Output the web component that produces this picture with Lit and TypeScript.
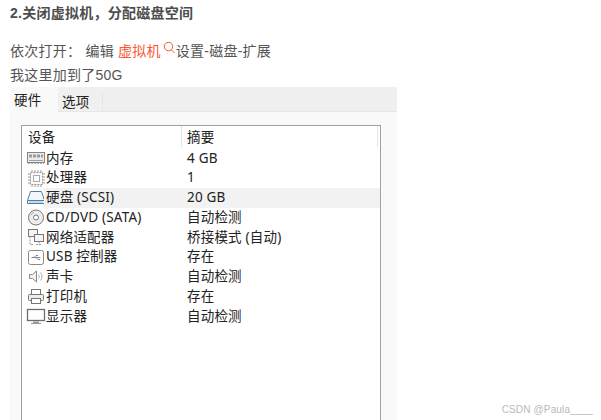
import { LitElement, html, css, svg } from 'lit';
import { customElement } from 'lit/decorators.js';

const ICONS: Record<string, unknown> = {
  memory: svg`<rect x="1.500" y="3.500" width="17" height="10" fill="#ececec" stroke="#858585"/><path d="M3 7h14" stroke="#9a9a9a" stroke-width="3" stroke-dasharray="3 1"/><path d="M3 11.500h14" stroke="#a0a0a0"/><path d="M2 14.500h16" stroke="#b0b0b0" stroke-dasharray="2 1"/>`,
  cpu: svg`<rect x="4.500" y="3.500" width="12" height="12" fill="#fafafa" stroke="#999" stroke-dasharray="2 1"/><rect x="7.500" y="6.500" width="6" height="6" fill="#fff" stroke="#aaa"/><path d="M6 1v2M9 1v2M12 1v2M15 1v2M6 16v2M9 16v2M12 16v2M15 16v2M2 5h2M2 8h2M2 11h2M2 14h2M17 5h2M17 8h2M17 11h2M17 14h2" stroke="#999"/>`,
  disk: svg`<path d="M4.500 3.500h11l3 9v3h-17v-3z" fill="#f3f7fb" stroke="#4f7fa8"/><path d="M1.500 12.500h17" stroke="#4f7fa8"/><path d="M3 14h14" stroke="#9dbbd6"/>`,
  cd: svg`<circle cx="10" cy="9.500" r="7.500" fill="#eee" stroke="#777"/><circle cx="10" cy="9.500" r="2.500" fill="#fff" stroke="#777"/><path d="M5 7a5.500 5.500 0 0 1 3-2.500" fill="none" stroke="#aaa"/>`,
  net: svg`<rect x="2.500" y="1.500" width="9" height="7" fill="#f4f4f4" stroke="#777"/><rect x="8.500" y="6.500" width="9" height="7" fill="#f4f4f4" stroke="#777"/><path d="M13 13.500v3M10 16.500h6M4 8.500v8h4" fill="none" stroke="#999" stroke-dasharray="2 1"/>`,
  usb: svg`<rect x="2.500" y="2.500" width="15" height="14" rx="2" fill="#fff" stroke="#888"/><path d="M5.500 9.500h9M8 9.500l2-2h2M10 9.500l2 2h2" fill="none" stroke="#888"/>`,
  sound: svg`<path d="M3.500 7.500h3l4-3.500v11l-4-3.500h-3z" fill="#f2f2f2" stroke="#888"/><path d="M12.500 7.500a3 3 0 0 1 0 4M14.500 5.500a6 6 0 0 1 0 8" fill="none" stroke="#aaa"/>`,
  printer: svg`<rect x="5.500" y="2.500" width="9" height="5" fill="#fff" stroke="#777"/><rect x="2.500" y="7.500" width="15" height="6" rx="1" fill="#eee" stroke="#777"/><rect x="5.500" y="11.500" width="9" height="5" fill="#fff" stroke="#777"/>`,
  monitor: svg`<rect x="1.500" y="2.500" width="17" height="11" fill="#fff" stroke="#6e6e6e" stroke-width="1.300"/><path d="M7 14.500h6v1.500H7z" fill="#999"/><path d="M5 16.500h10" stroke="#999"/>`,
};

const ROWS = [
  { icon: 'memory', name: '内存', value: '4 GB' },
  { icon: 'cpu', name: '处理器', value: '1' },
  { icon: 'disk', name: '硬盘 (SCSI)', value: '20 GB', selected: true },
  { icon: 'cd', name: 'CD/DVD (SATA)', value: '自动检测' },
  { icon: 'net', name: '网络适配器', value: '桥接模式 (自动)' },
  { icon: 'usb', name: 'USB 控制器', value: '存在' },
  { icon: 'sound', name: '声卡', value: '自动检测' },
  { icon: 'printer', name: '打印机', value: '存在' },
  { icon: 'monitor', name: '显示器', value: '自动检测' },
];

@customElement('app-root')
class AppRoot extends LitElement {
  static styles = css`
    :host {
      display: block;
      position: relative;
      height: 420px;
      overflow: hidden;
      background: #fff;
      font-family: 'Liberation Sans', 'Noto Sans CJK SC', sans-serif;
      color: #555;
      font-size: 14px;
      letter-spacing: 0.25px;
    }
    .article {
      padding: 3px 0 0 10px;
    }
    .title {
      height: 20px;
      line-height: 20px;
      font-weight: bold;
      color: #4d4d4d;
    }
    .line {
      height: 24px;
      line-height: 24px;
      white-space: nowrap;
    }
    .open {
      margin-top: 16px;
    }
    .link {
      color: #fc5531;
    }
    .search {
      display: inline-block;
      vertical-align: 1px;
      width: 12px;
      height: 14px;
      margin: 0 1px 0 2px;
    }
    .window {
      width: 387px;
      height: 340px;
      margin-left: 10px;
      background: #f9f9f9;
      font-family: 'Noto Sans', 'Noto Sans CJK SC', sans-serif;
      font-size: 13.5px;
      letter-spacing: 0.2px;
      color: #222;
    }
    .tabs {
      display: flex;
      align-items: flex-end;
      height: 24px;
      background: #f0f0f0;
      border-bottom: 1px solid #e6e6e6;
    }
    .tab {
      height: 25px;
      width: 48px;
      line-height: 26px;
      padding-left: 4px;
      box-sizing: border-box;
      background: #f9f9f9;
      margin-bottom: -1px;
    }
    .tab.off {
      height: 20px;
      width: 45px;
      line-height: 22px;
      padding-left: 4px;
      margin-bottom: 0;
      background: #f0f0f0;
      border-right: 1px solid #e6e6e6;
    }
    .panel {
      padding: 13px 16px 0 11px;
    }
    .list {
      box-sizing: border-box;
      height: 320px;
      background: #fff;
      border: 1px solid #a0a0a8;
      padding-left: 1px;
    }
    .head,
    .row {
      display: grid;
      grid-template-columns: 158px 1fr;
      align-items: center;
    }
    .head {
      height: 22.5px;
      padding-right: 2px;
      align-items: start;
    }
    .head span {
      padding-left: 5px;
      height: 21px;
      line-height: 23px;
    }
    .head span + span {
      border-left: 1px solid #e4e4e4;
      border-right: 1px solid #e4e4e4;
      padding-left: 5px;
    }
    .row {
      height: 19.75px;
    }
    .name {
      display: flex;
      align-items: center;
      white-space: nowrap;
      height: 19.75px;
    }
    .name svg {
      width: 20px;
      height: 19px;
      margin: 0 -2px 0 3px;
      flex: none;
    }
    .row .value {
      padding-left: 6px;
      white-space: nowrap;
      line-height: 19.75px;
    }
    .label {
      flex: 1;
      line-height: 19.75px;
      padding-left: 2px;
    }
    .row.selected .label,
    .row.selected .value {
      background: #f2f2f2;
    }
    .mark {
      position: absolute;
      right: 8px;
      bottom: 5px;
      font-size: 10px;
      letter-spacing: 0.15px;
      color: #b9b9b9;
      white-space: pre;
    }
  `;

  render() {
    return html`
      <div class="article">
        <div class="title">2.关闭虚拟机，分配磁盘空间</div>
        <div class="line open">依次打开： 编辑 <span class="link">虚拟机</span><svg class="search" viewBox="0 0 12 14" fill="none" stroke="#fc5531"><circle cx="5.500" cy="5.500" r="4.200" /><path d="M8.500 9l3 3" /></svg>设置-磁盘-扩展</div>
        <div class="line">我这里加到了50G</div>
      </div>
      <div class="window">
        <div class="tabs">
          <div class="tab">硬件</div>
          <div class="tab off">选项</div>
        </div>
        <div class="panel">
          <div class="list">
            <div class="head"><span>设备</span><span>摘要</span></div>
            ${ROWS.map(
              (r) => html`
                <div class="row ${r.selected ? 'selected' : ''}">
                  <div class="name">
                    <svg viewBox="0 0 20 19">${ICONS[r.icon]}</svg>
                    <span class="label">${r.name}</span>
                  </div>
                  <div class="value">${r.value}</div>
                </div>
              `,
            )}
          </div>
        </div>
      </div>
      <div class="mark">CSDN @Paula____</div>
    `;
  }
}
